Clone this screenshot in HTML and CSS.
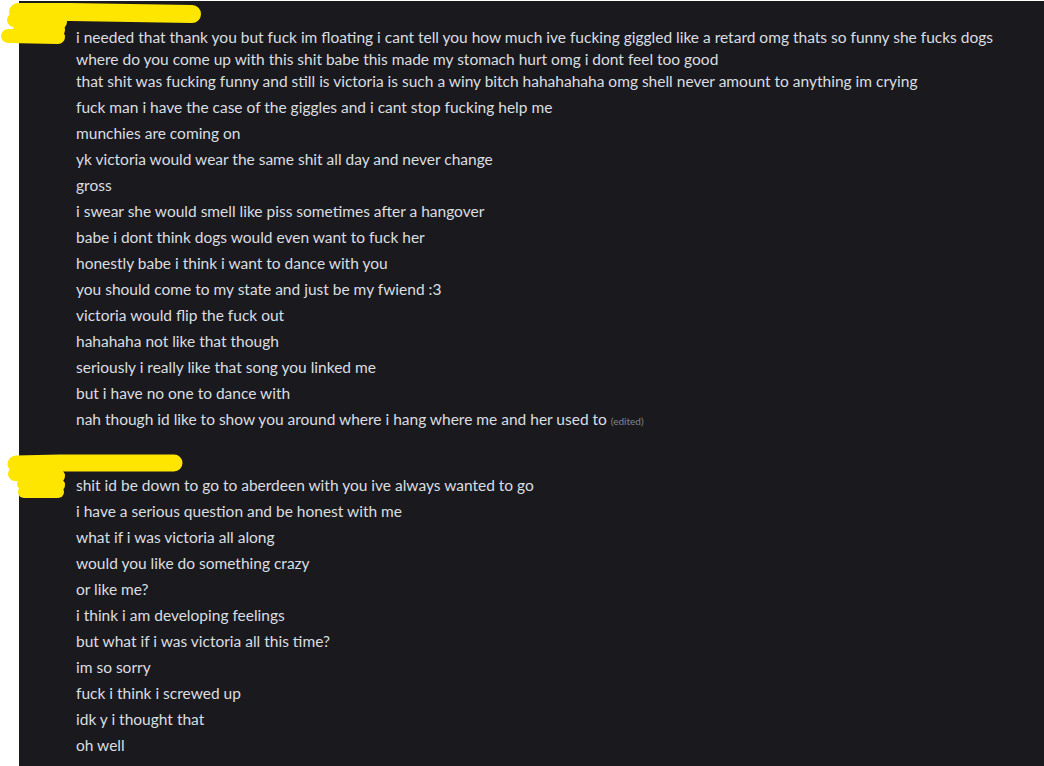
FILE: index.html
```html
<!DOCTYPE html>
<html>
<head>
<meta charset="utf-8">
<link rel="stylesheet" href="styles.css">
</head>
<body>
<div class="panel">
  <div class="group first">
    <svg class="scribble s1" width="210" height="50" viewBox="0 0 210 50">
      <g stroke="#ffe600" stroke-linecap="round" stroke-linejoin="round" fill="none">
        <path d="M18 12 L70 12 L192 14" stroke-width="18"/>
        <path d="M14 20 L60 22" stroke-width="14"/>
        <path d="M20 29 L58 30" stroke-width="14"/>
        <path d="M8 36 L58 37" stroke-width="14"/>
      </g>
    </svg>
    <div class="msg head"><div class="header"></div>i needed that thank you but fuck im floating i cant tell you how much ive fucking giggled like a retard omg thats so funny she fucks dogs<br>where do you come up with this shit babe this made my stomach hurt omg i dont feel too good<br>that shit was fucking funny and still is victoria is such a winy bitch hahahahaha omg shell never amount to anything im crying</div>
    <div class="msg">fuck man i have the case of the giggles and i cant stop fucking help me</div>
    <div class="msg">munchies are coming on</div>
    <div class="msg">yk victoria would wear the same shit all day and never change</div>
    <div class="msg">gross</div>
    <div class="msg">i swear she would smell like piss sometimes after a hangover</div>
    <div class="msg">babe i dont think dogs would even want to fuck her</div>
    <div class="msg">honestly babe i think i want to dance with you</div>
    <div class="msg">you should come to my state and just be my fwiend :3</div>
    <div class="msg">victoria would flip the fuck out</div>
    <div class="msg">hahahaha not like that though</div>
    <div class="msg">seriously i really like that song you linked me</div>
    <div class="msg">but i have no one to dance with</div>
    <div class="msg">nah though id like to show you around where i hang where me and her used to <span class="edited">(edited)</span></div>
  </div>
  <div class="group second">
    <svg class="scribble s2" width="200" height="54" viewBox="0 0 200 54">
      <g stroke="#ffe600" stroke-linecap="round" stroke-linejoin="round" fill="none">
        <path d="M16 14 L60 13 L174 13" stroke-width="17"/>
        <path d="M15 24 L58 26" stroke-width="14"/>
        <path d="M24 34 L58 35" stroke-width="14"/>
        <path d="M24 42 L58 42" stroke-width="12"/>
      </g>
    </svg>
    <div class="msg head"><div class="header"></div>shit id be down to go to aberdeen with you ive always wanted to go</div>
    <div class="msg">i have a serious question and be honest with me</div>
    <div class="msg">what if i was victoria all along</div>
    <div class="msg">would you like do something crazy</div>
    <div class="msg">or like me?</div>
    <div class="msg">i think i am developing feelings</div>
    <div class="msg">but what if i was victoria all this time?</div>
    <div class="msg">im so sorry</div>
    <div class="msg">fuck i think i screwed up</div>
    <div class="msg">idk y i thought that</div>
    <div class="msg">oh well</div>
  </div>
</div>
</body>
</html>
```
FILE: styles.css
```css
html, body {
  margin: 0;
  padding: 0;
  background: #ffffff;
}
body {
  width: 1044px;
  height: 766px;
  overflow: hidden;
}
.panel {
  margin-left: 19px;
  margin-top: 1px;
  height: 765px;
  background: #1a1a1e;
  box-sizing: border-box;
  padding-top: 1px;
  font-family: Lato, "Noto Sans", sans-serif;
  font-size: 15.5px;
  line-height: 22px;
  color: #dbdee1;
}
.group {
  position: relative;
}
.group.second {
  margin-top: 16px;
}
.msg {
  padding: 2px 0 2px 57px;
  white-space: nowrap;
}
.header {
  height: 22px;
}
.edited {
  font-size: 10px;
  color: #80848e;
  line-height: 22px;
}
.scribble {
  position: absolute;
  left: -19px;
  pointer-events: none;
}
.s1 {
  top: -2px;
}
.s2 {
  top: 0px;
}
```
